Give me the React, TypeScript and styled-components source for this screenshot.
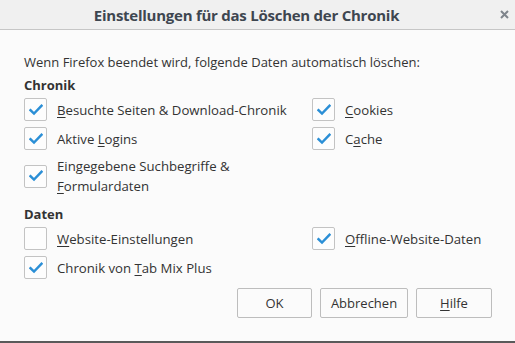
import React from 'react';
import styled, { createGlobalStyle } from 'styled-components';

const GlobalStyle = createGlobalStyle`
  html, body {
    margin: 0;
    padding: 0;
    background: #fbfbfb;
  }
  body {
    font-family: "Open Sans", "Noto Sans", sans-serif;
    font-size: 13px;
    color: #333333;
  }
`;

const Window = styled.div`
  width: 515px;
  height: 343px;
  box-sizing: border-box;
  border-bottom: 2px solid #5a5a5a;
  background: #fbfbfb;
  display: flex;
  flex-direction: column;
`;

const TitleBar = styled.div`
  height: 29px;
  flex: none;
  background: #f0f0f0;
  border-bottom: 1px solid #c6c6c6;
  display: flex;
  align-items: center;
`;

const Title = styled.div`
  flex: 1;
  text-align: center;
  font-weight: 700;
  font-size: 15px;
  color: #3e4650;
  letter-spacing: -0.25px;
`;

const CloseButton = styled.div`
  width: 22px;
  height: 29px;
  display: flex;
  align-items: center;
  justify-content: center;
`;

const Body = styled.div`
  flex: 1;
  padding: 22px 23px 0 24px;
  display: flex;
  flex-direction: column;
`;

const Intro = styled.div`
  line-height: 20px;
`;

const SectionTitle = styled.div<{ $gap: number }>`
  font-weight: 700;
  line-height: 20px;
  margin-top: ${p => p.$gap}px;
  margin-bottom: 3px;
`;

const Grid = styled.div`
  display: grid;
  grid-template-columns: 288px 1fr;
  row-gap: 6px;
`;

const Item = styled.label`
  display: flex;
  align-items: center;
  gap: 10px;
  line-height: 20px;
  font-size: 13.2px;
`;

const Box = styled.span`
  width: 21px;
  height: 21px;
  flex: none;
  border: 1px solid #c3c3c3;
  border-radius: 2px;
  background: #fdfdfd;
  display: flex;
  align-items: center;
  justify-content: center;
`;

const Key = styled.span`
  text-decoration: underline;
  text-underline-offset: 2px;
`;

const Buttons = styled.div`
  margin-top: auto;
  margin-bottom: 23px;
  display: flex;
  justify-content: flex-end;
  gap: 8px;
`;

const Button = styled.button<{ $w: number }>`
  width: ${p => p.$w}px;
  height: 30px;
  border: 1px solid #bdbdbd;
  border-radius: 2px;
  background: #fbfbfb;
  font-family: inherit;
  font-size: 13px;
  color: #333333;
  padding: 0;
`;

const Check = () => (
  <svg width="14" height="12" viewBox="0 0 14 12">
    <path d="M1.5 6.2 L5 9.6 L12.5 1.8" fill="none" stroke="#2b8fd6" strokeWidth="2.4" strokeLinecap="square" />
  </svg>
);

const CheckItem: React.FC<{ checked?: boolean; children: React.ReactNode }> = ({ checked = true, children }) => (
  <Item>
    <Box>{checked && <Check />}</Box>
    <span>{children}</span>
  </Item>
);

export default function App() {
  return (
    <>
      <GlobalStyle />
      <Window>
        <TitleBar>
          <Title>Einstellungen für das Löschen der Chronik</Title>
          <CloseButton>
            <svg width="9" height="9" viewBox="0 0 9 9">
              <path d="M1 1 L8 8 M8 1 L1 8" stroke="#7f858c" strokeWidth="2" />
            </svg>
          </CloseButton>
        </TitleBar>
        <Body>
          <Intro>Wenn Firefox beendet wird, folgende Daten automatisch löschen:</Intro>
          <SectionTitle $gap={3}>Chronik</SectionTitle>
          <Grid>
            <CheckItem><Key>B</Key>esuchte Seiten &amp; Download-Chronik</CheckItem>
            <CheckItem><Key>C</Key>ookies</CheckItem>
            <CheckItem>Aktive <Key>L</Key>ogins</CheckItem>
            <CheckItem>C<Key>a</Key>che</CheckItem>
            <CheckItem>Eingegebene Suchbegriffe &amp;<br /><Key>F</Key>ormulardaten</CheckItem>
          </Grid>
          <SectionTitle $gap={8}>Daten</SectionTitle>
          <Grid>
            <CheckItem checked={false}><Key>W</Key>ebsite-Einstellungen</CheckItem>
            <CheckItem><Key>O</Key>ffline-Website-Daten</CheckItem>
            <CheckItem>Chronik von <Key>T</Key>ab Mix Plus</CheckItem>
          </Grid>
          <Buttons>
            <Button $w={75}>OK</Button>
            <Button $w={88}>Abbrechen</Button>
            <Button $w={76}><Key>H</Key>ilfe</Button>
          </Buttons>
        </Body>
      </Window>
    </>
  );
}
